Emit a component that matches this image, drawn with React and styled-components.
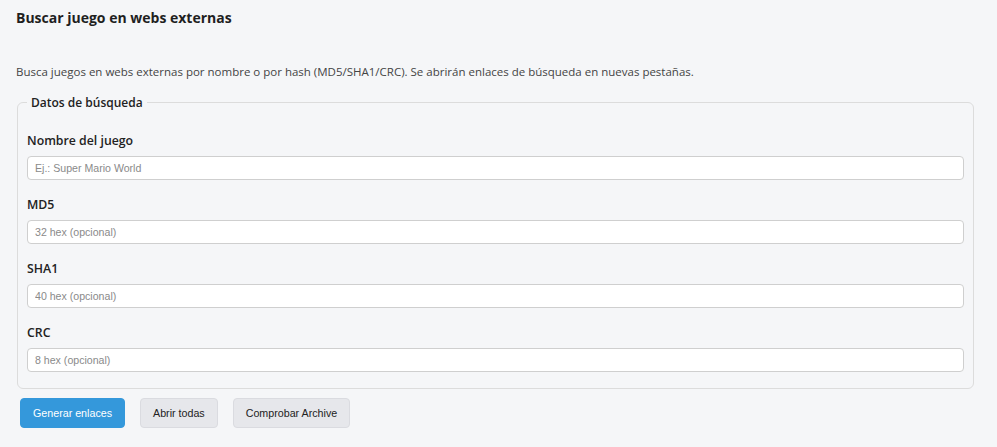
import styled, { createGlobalStyle } from 'styled-components';

const GlobalStyle = createGlobalStyle`
    body {
        margin: 0;
        background-color: #f5f6f8;
        font-family: "Open Sans", "Noto Sans", sans-serif;
        color: #222;
    }
`;

const fields = [
    { id: 'name', label: 'Nombre del juego', placeholder: 'Ej.: Super Mario World' },
    { id: 'md5', label: 'MD5', placeholder: '32 hex (opcional)' },
    { id: 'sha1', label: 'SHA1', placeholder: '40 hex (opcional)' },
    { id: 'crc', label: 'CRC', placeholder: '8 hex (opcional)' },
];

function App() {
    return (
        <>
            <GlobalStyle />
            <Page>
                <Title>Buscar juego en webs externas</Title>
                <Description>
                    Busca juegos en webs externas por nombre o por hash (MD5/SHA1/CRC). Se abrirán enlaces de búsqueda en nuevas pestañas.
                </Description>
                <FieldSet>
                    <Legend>Datos de búsqueda</Legend>
                    {fields.map((f) => (
                        <Field key={f.id}>
                            <Label htmlFor={f.id}>{f.label}</Label>
                            <Input id={f.id} type="text" placeholder={f.placeholder} />
                        </Field>
                    ))}
                </FieldSet>
                <ButtonRow>
                    <Button $primary>Generar enlaces</Button>
                    <Button>Abrir todas</Button>
                    <Button>Comprobar Archive</Button>
                </ButtonRow>
            </Page>
        </>
    );
}

const Page = styled.div`
    padding: 8px 23px 20px 16px;
`;

const Title = styled.h2`
    margin: 0;
    font-size: 14px;
    line-height: 20px;
    font-weight: 700;
    color: #1f1f1f;
`;

const Description = styled.p`
    margin: 35px 0 0 0;
    font-size: 11.5px;
    line-height: 18px;
    color: #444;
`;

const FieldSet = styled.fieldset`
    margin: 13px 0 0 1px;
    padding: 4px 9px 16px 9px;
    border: 1px solid #dcdcdc;
    border-radius: 6px;
`;

const Legend = styled.legend`
    padding: 0 4px;
    font-size: 12px;
    font-weight: 600;
    color: #222;
`;

const Field = styled.div`
    display: flex;
    flex-direction: column;
    margin-top: 16px;

    &:first-of-type {
        margin-top: 17px;
    }
`;

const Label = styled.label`
    font-size: 12.3px;
    line-height: 18px;
    font-weight: 600;
    color: #222;
    margin-bottom: 6px;
`;

const Input = styled.input`
    box-sizing: border-box;
    width: 100%;
    height: 24px;
    padding: 0 7px;
    border: 1px solid #cfcfcf;
    border-radius: 4px;
    background-color: #fff;
    font-family: "Liberation Sans", Arial, sans-serif;
    font-size: 10.6px;
    outline: none;

    &::placeholder {
        color: #8a8a8a;
    }
`;

const ButtonRow = styled.div`
    display: flex;
    gap: 15px;
    margin: 9px 0 0 4px;
`;

const Button = styled.button`
    height: 30px;
    padding: 0 12px;
    border-radius: 4px;
    border: 1px solid ${(p) => (p.$primary ? '#3498db' : '#dadbe0')};
    background-color: ${(p) => (p.$primary ? '#3498db' : '#e6e7eb')};
    color: ${(p) => (p.$primary ? '#fff' : '#222')};
    font-family: "Liberation Sans", Arial, sans-serif;
    font-size: 10.7px;
    cursor: pointer;
`;

export default App;
